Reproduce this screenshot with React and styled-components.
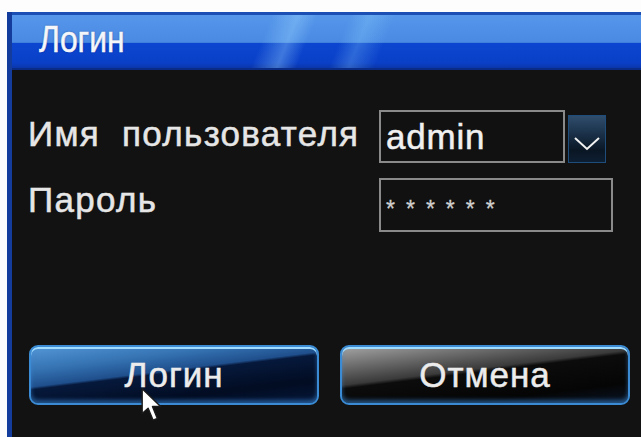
import React from 'react'
import styled, { createGlobalStyle } from 'styled-components'

const GlobalStyles = createGlobalStyle`
  html, body {
    margin: 0;
    padding: 0;
    background: #fdfdfd;
    overflow: hidden;
  }
  * { box-sizing: border-box; }
`

const Screen = styled.div`
  width: 641px;
  height: 437px;
  padding: 12px 0 0 7px;
  font-family: 'Liberation Sans', Arial, sans-serif;
`

const Window = styled.div`
  position: relative;
  height: 100%;
  display: flex;
  flex-direction: column;
  background: #121212;
  border-left: 5px solid #143c9c;
`

const TitleBar = styled.div`
  height: 58px;
  display: flex;
  align-items: center;
  padding-left: 27px;
  border-top: 3px solid #1c4fb4;
  border-bottom: 2px solid #0a2c86;
  background:
    linear-gradient(112deg, transparent 40%, rgba(160, 220, 255, 0.35) 44%, transparent 47%, transparent 52%, rgba(150, 220, 255, 0.25) 55%, transparent 59%),
    linear-gradient(180deg, #5696ea 0%, #4a8ae4 50%, #3f7fdc 52%, #0c46d0 53%, #0a40c8 90%, #0a36aa 100%);
`

const Title = styled.h1`
  margin: 0 0 3px;
  font-size: 37px;
  font-weight: normal;
  color: #f4f6fa;
  transform: scaleX(0.86);
  transform-origin: left center;
  -webkit-text-stroke: 0.5px #f4f6fa;
  text-shadow: 0 0 2px rgba(0, 20, 80, 0.6);
`

const Body = styled.div`
  flex: 1;
  display: flex;
  flex-direction: column;
  padding: 40px 0 0 16px;
`

const Form = styled.div`
  display: grid;
  grid-template-columns: 351px auto;
  row-gap: 15px;
  align-items: center;
`

const Label = styled.div`
  font-size: 35px;
  color: #e6e6e6;
  letter-spacing: 1.3px;
  white-space: pre;
  -webkit-text-stroke: 0.5px #e6e6e6;
  margin-top: ${(p) => p.$shift || 0}px;
`

const FieldRow = styled.div`
  display: flex;
  align-items: flex-end;
  gap: 3px;
`

const Field = styled.div`
  width: ${(p) => p.$width}px;
  height: ${(p) => p.$height}px;
  border: 2px solid #8a8a8a;
  background: #111;
  display: flex;
  align-items: center;
  padding-left: 5px;
  color: #f0f0f0;
  font-size: 35px;
  letter-spacing: 0.8px;
  -webkit-text-stroke: 0.5px #f0f0f0;
`

const Mask = styled.span`
  font-size: 23px;
  letter-spacing: 11px;
  color: #cfcfcf;
  -webkit-text-stroke: 0.3px #cfcfcf;
  margin-top: 8px;
`

const DropButton = styled.div`
  width: 38px;
  height: 48px;
  display: flex;
  align-items: flex-end;
  justify-content: center;
  padding-bottom: 11px;
  border: 1px solid #1e4d7c;
  background: linear-gradient(180deg, #2f4d6c 0%, #1a3048 40%, #0a1624 75%, #0e1f33 100%);
`

const Buttons = styled.div`
  display: flex;
  gap: 21px;
  margin-top: auto;
  margin-bottom: 32px;
  padding-left: 1px;
`

const Button = styled.div`
  width: 290px;
  height: 60px;
  border-radius: 9px;
  border: 2px solid #3a8bd4;
  display: flex;
  align-items: center;
  justify-content: center;
  font-size: 35px;
  color: #ececec;
  letter-spacing: 1px;
  -webkit-text-stroke: 0.5px #ececec;
  box-shadow: inset 0 2px 0 #9fdcff, inset 0 -3px 4px rgba(60, 140, 220, 0.55);
  background: ${(p) =>
    p.$primary
      ? 'linear-gradient(173deg, #5496d6 0%, #3674b4 25%, #1f4f8c 44%, #06193c 47%, #020c22 75%, #06183a 100%)'
      : 'linear-gradient(173deg, #a4a4a4 0%, #6c6c6c 22%, #3a3a3a 42%, #0c0c0c 46%, #050505 78%, #0a1526 100%)'};
`

const Cursor = styled.svg`
  position: absolute;
  left: 128px;
  top: 375px;
  width: 26px;
  height: 38px;
`

const Chevron = () => (
  <svg width='26' height='14' viewBox='0 0 26 14'>
    <polyline points='1,1 13,12 25,1' fill='none' stroke='#f2f2f2' strokeWidth='2' />
  </svg>
)

const App = () => (
  <>
    <GlobalStyles />
    <Screen>
      <Window>
        <TitleBar>
          <Title>Логин</Title>
        </TitleBar>
        <Body>
          <Form>
            <Label $shift={-6}>{'Имя  пользователя'}</Label>
            <FieldRow>
              <Field $width={186} $height={53}>admin</Field>
              <DropButton>
                <Chevron />
              </DropButton>
            </FieldRow>
            <Label $shift={-10}>Пароль</Label>
            <Field $width={234} $height={54}>
              <Mask>******</Mask>
            </Field>
          </Form>
          <Buttons>
            <Button $primary>Логин</Button>
            <Button>Отмена</Button>
          </Buttons>
        </Body>
        <Cursor viewBox='0 0 24 34'>
          <path
            d='M2 1 L2 24 L7.5 19 L12 30 L16 28.5 L11.5 17.5 L19 17.5 Z'
            fill='#ffffff'
            stroke='#1a1a1a'
            strokeWidth='1.3'
            strokeLinejoin='round'
          />
        </Cursor>
      </Window>
    </Screen>
  </>
)

export default App
